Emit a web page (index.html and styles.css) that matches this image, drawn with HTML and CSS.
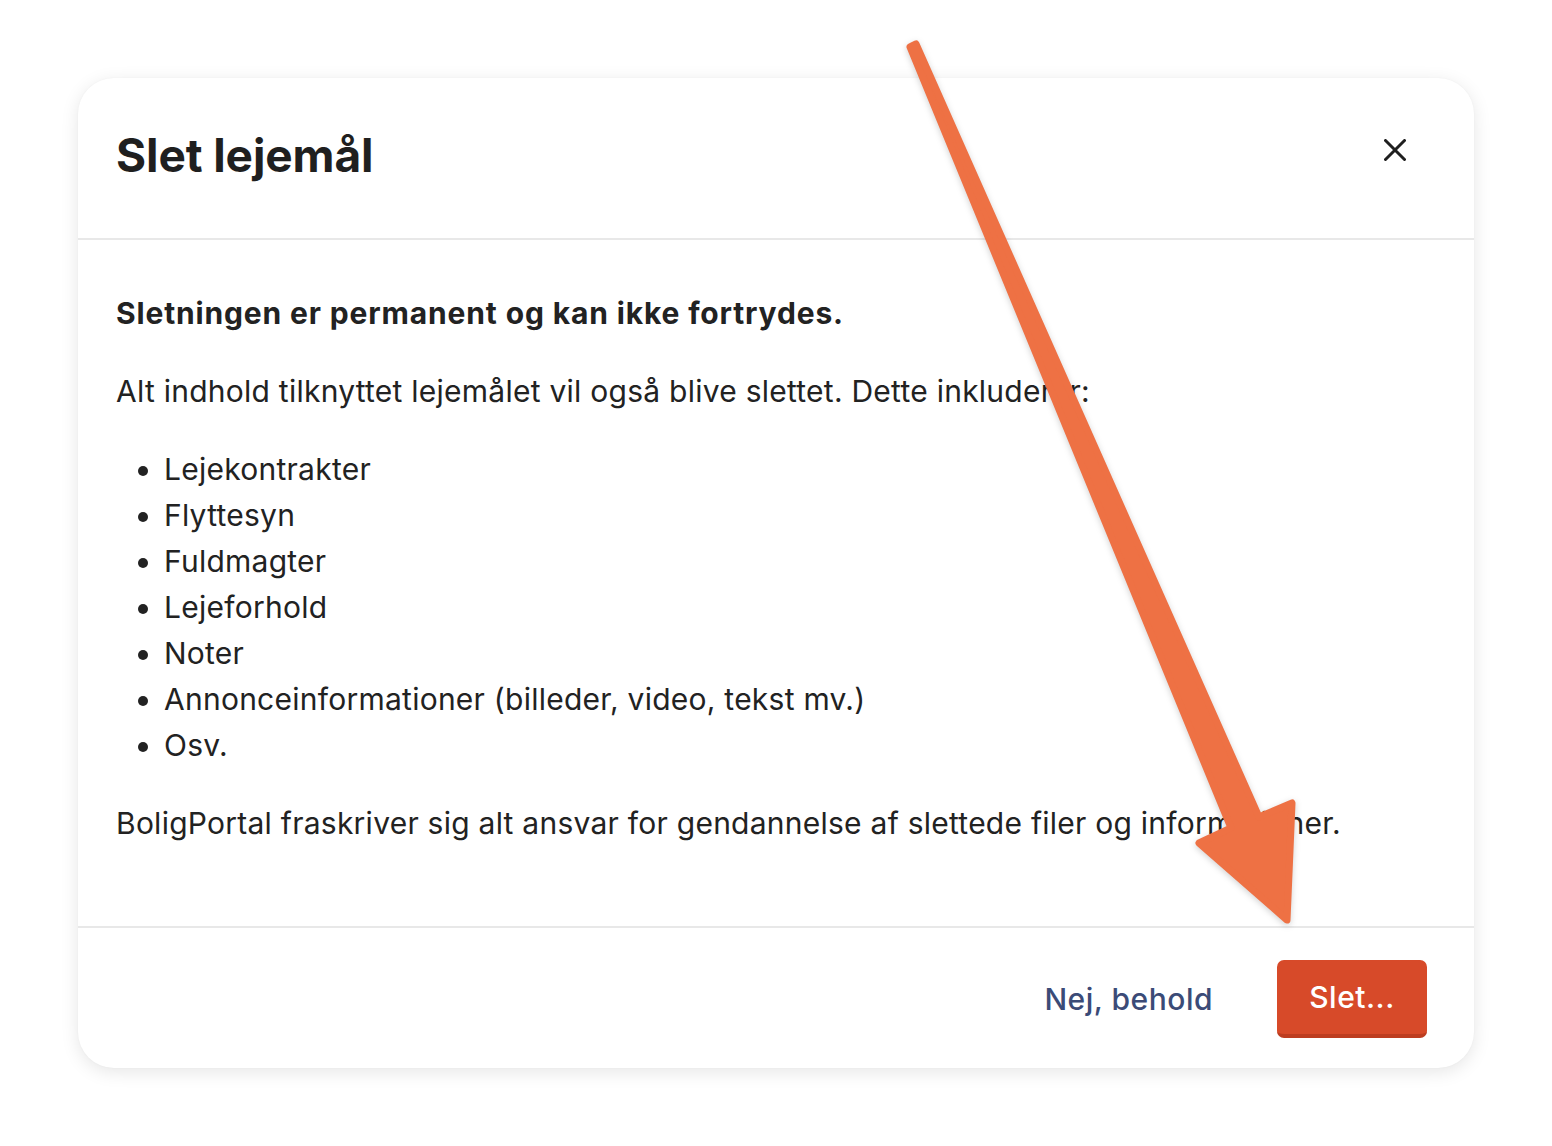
FILE: index.html
```html
<!DOCTYPE html>
<html lang="da">

<head>
    <meta charset="UTF-8">
    <meta name="viewport" content="width=device-width, initial-scale=1.0">
    <title>Slet lejemål</title>
    <link rel="stylesheet" href="styles.css">
</head>

<body>
    <div class='modal'>
        <div class='modal_header'>
            <h2 class='modal_title'>Slet lejemål</h2>
            <button class='modal_close' aria-label='Luk'>
                <svg width="22" height="22" viewBox="0 0 22 22">
                    <path d="M1.5 1.5 L20.5 20.5 M20.5 1.5 L1.5 20.5" stroke="#1f1f1f" stroke-width="3" stroke-linecap="round" fill="none" />
                </svg>
            </button>
        </div>

        <div class='modal_body'>
            <p class='modal_lead'>Sletningen er permanent og kan ikke fortrydes.</p>
            <p>Alt indhold tilknyttet lejemålet vil også blive slettet. Dette inkluderer:</p>
            <ul class='modal_list'>
                <li>Lejekontrakter</li>
                <li>Flyttesyn</li>
                <li>Fuldmagter</li>
                <li>Lejeforhold</li>
                <li>Noter</li>
                <li>Annonceinformationer (billeder, video, tekst mv.)</li>
                <li>Osv.</li>
            </ul>
            <p>BoligPortal fraskriver sig alt ansvar for gendannelse af slettede filer og informationer.</p>
        </div>

        <div class='modal_footer'>
            <button class='btn_link'>Nej, behold</button>
            <button class='btn_danger'>Slet...</button>
        </div>
    </div>

    <!-- annotation arrow drawn on top of the screenshot -->
    <svg class='arrow' width="1552" height="1146" viewBox="0 0 1552 1146">
        <polygon points="910,47 916,44 1259,817 1292,803 1287,920 1199,843 1231,828"
            fill="#ee7144" stroke="#ee7144" stroke-width="7" stroke-linejoin="round" />
    </svg>
</body>

</html>
```

FILE: styles.css
```css
* {
    box-sizing: border-box;
}

body {
    margin: 0;
    padding: 78px;
    background: #fff;
    font-family: Inter, "Noto Sans", sans-serif;
    color: #222;
}

.modal {
    width: 1396px;
    background: #fff;
    border-radius: 36px;
    box-shadow: 0 4px 18px rgba(0, 0, 0, .10), 0 0 2px rgba(0, 0, 0, .04);
    overflow: hidden;
}

.modal_header {
    height: 162px;
    display: flex;
    align-items: center;
    justify-content: space-between;
    padding: 0 68px 6px 38px;
    border-bottom: 2px solid #e8e8e8;
}

.modal_title {
    margin: 0;
    font-size: 46px;
    font-weight: 700;
    letter-spacing: -.1px;
    color: #1f1f1f;
}

.modal_close {
    border: 0;
    background: none;
    padding: 0;
    width: 22px;
    height: 22px;
    margin-bottom: 10px;
    cursor: pointer;
}

.modal_body {
    padding: 50px 38px 48px;
    font-size: 30px;
    letter-spacing: .25px;
    line-height: 46px;
}

.modal_body p {
    margin: 0 0 32px;
}

.modal_body .modal_lead {
    font-weight: 700;
    letter-spacing: .85px;
}

.modal_list {
    margin: 0 0 32px;
    padding-left: 48px;
}

.modal_footer {
    height: 142px;
    display: flex;
    align-items: center;
    justify-content: flex-end;
    gap: 64px;
    padding: 2px 47px 0;
    border-top: 2px solid #e8e8e8;
}

.btn_link {
    border: 0;
    background: none;
    font-family: inherit;
    font-size: 30px;
    font-weight: 500;
    letter-spacing: .5px;
    color: #3b4b77;
    cursor: pointer;
    padding: 0;
}

.btn_danger {
    width: 150px;
    height: 78px;
    border: 0;
    border-bottom: 4px solid #bd3d20;
    border-radius: 7px;
    background: #d74a29;
    color: #fff;
    font-family: inherit;
    font-size: 30px;
    font-weight: 500;
    letter-spacing: .5px;
    cursor: pointer;
}

.arrow {
    position: absolute;
    top: 0;
    left: 0;
    pointer-events: none;
    filter: drop-shadow(0 2px 3px rgba(0, 0, 0, .18));
}
```
